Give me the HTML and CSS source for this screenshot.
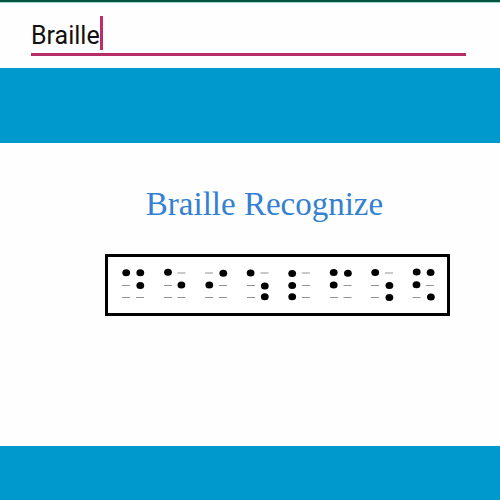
FILE: index.html
```html
<!DOCTYPE html>
<html lang="en">
<head>
<meta charset="utf-8">
<meta name="viewport" content="width=device-width, initial-scale=1">
<title>Braille Recognize</title>
<link rel="stylesheet" href="styles.css">
</head>
<body>
<header class="search">
  <div class="field">
    <input class="input" type="text" value="Braille" aria-label="Text">
    <span class="caret"></span>
  </div>
</header>
<div class="band"></div>
<main class="content">
  <h1 class="title">Braille Recognize</h1>
  <div class="sample">
    <svg class="cells" viewBox="108 257 339 56" role="img" aria-label="Eight braille cells">
      <path class="dashes" d="M122 285.5h8M122 297.5h8M136 297.5h8 M177.500 273h8M164 285.500h8M164 297.500h8M177.500 297.500h8 M205 273h8M219 285.500h8M205 297.500h8M219 297.500h8 M260.500 273h8M247 285.500h8M247 297.500h8 M302 273h8M302 285.500h8M302 297.500h8 M343.500 285.500h8M330 297.500h8M343.500 297.500h8 M385 273h8M371 285.500h8M371 297.500h8 M426 285.500h8M412.500 297.500h8"/>
      <g class="dots">
        <ellipse cx="126.200" cy="272.800" rx="3.900" ry="3.500"/><ellipse cx="140.300" cy="272.800" rx="3.900" ry="3.500"/><ellipse cx="140.300" cy="285.600" rx="3.900" ry="3.500"/>
        <ellipse cx="168" cy="272.300" rx="3.900" ry="3.500"/><ellipse cx="181.400" cy="284.900" rx="3.900" ry="3.500"/>
        <ellipse cx="223.300" cy="273.300" rx="3.900" ry="3.500"/><ellipse cx="209.300" cy="284.900" rx="3.900" ry="3.500"/>
        <ellipse cx="250.600" cy="273" rx="3.900" ry="3.500"/><ellipse cx="264.800" cy="285.900" rx="3.900" ry="3.500"/><ellipse cx="264.800" cy="296.800" rx="3.900" ry="3.500"/>
        <ellipse cx="292.200" cy="273.400" rx="3.900" ry="3.500"/><ellipse cx="292.200" cy="285.400" rx="3.900" ry="3.500"/><ellipse cx="292.200" cy="296.700" rx="3.900" ry="3.500"/>
        <ellipse cx="333.700" cy="272.600" rx="3.900" ry="3.500"/><ellipse cx="347.900" cy="273.200" rx="3.900" ry="3.500"/><ellipse cx="333.700" cy="284.900" rx="3.900" ry="3.500"/>
        <ellipse cx="375.200" cy="272.600" rx="3.900" ry="3.500"/><ellipse cx="389.400" cy="285.600" rx="3.900" ry="3.500"/><ellipse cx="389.400" cy="297.400" rx="3.900" ry="3.500"/>
        <ellipse cx="416.700" cy="272.100" rx="3.900" ry="3.500"/><ellipse cx="430.600" cy="272.600" rx="3.900" ry="3.500"/><ellipse cx="416.500" cy="284.800" rx="3.900" ry="3.500"/><ellipse cx="430.900" cy="297.100" rx="3.900" ry="3.500"/>
      </g>
    </svg>
  </div>
</main>
<footer class="footer"></footer>
</body>
</html>
```
FILE: styles.css
```css
* {
  box-sizing: border-box;
}

body {
  display: flex;
  flex-direction: column;
  min-height: 100vh;
  margin: 0;
  background: #fefefe;
}

.search {
  padding: 11px 34px 12px 31px;
  border-top: 2px solid #005540;
  box-shadow: inset 0 1px #a5d4c8;
}

.field {
  position: relative;
}

.input {
  display: block;
  width: 100%;
  height: 43px;
  padding: 4px 0 0;
  border: 0;
  border-bottom: 3px solid #b52e66;
  border-radius: 0;
  outline: 0;
  background: transparent;
  color: #111;
  font: 25px Roboto, sans-serif;
}

.caret {
  position: absolute;
  top: 3px;
  left: 69px;
  width: 3px;
  height: 34px;
  background: #c22c66;
}

.band {
  height: 75px;
  background: #0099ce;
}

.content {
  flex: 1;
  padding: 41px 50px 0 105px;
}

.title {
  margin: 0 26px 30px 0;
  color: #3480d2;
  font: 33px/40px "Liberation Serif", serif;
  text-align: center;
}

.sample {
  border: 3px solid #000;
  background: #fff;
}

.cells {
  display: block;
  width: 100%;
}

.dashes {
  fill: none;
  stroke: #929292;
  stroke-width: 1;
}

.dots {
  fill: #000;
}

.footer {
  height: 54px;
  background: #0099ce;
}
```
